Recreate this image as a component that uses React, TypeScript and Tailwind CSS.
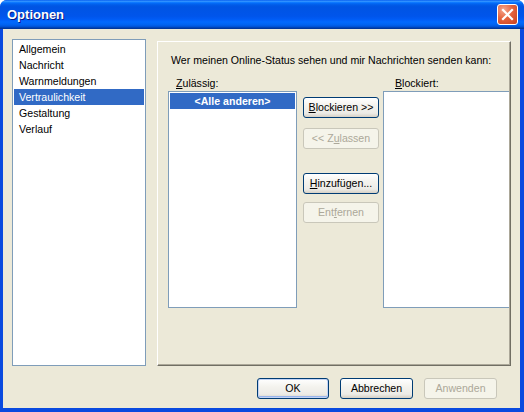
import type { ReactNode } from "react";

const FONT = "font-['Tahoma','Liberation_Sans',Arial,sans-serif]";

function XpButton({
  children,
  disabled,
  isDefault,
  w = "w-[76px]",
}: {
  children: ReactNode;
  disabled?: boolean;
  isDefault?: boolean;
  w?: string;
}) {
  if (disabled) {
    return (
      <div
        className={`${w} h-[21px] shrink-0 flex items-center justify-center rounded-[3px] border border-[#C9C7BA] bg-[#F5F4EA] text-[#ACA899]`}
      >
        {children}
      </div>
    );
  }
  return (
    <div
      className={`${w} h-[21px] shrink-0 flex items-center justify-center rounded-[3px] border border-[#003C74] bg-[linear-gradient(180deg,#FFFFFF_0%,#F4F3EE_40%,#ECEBE6_80%,#D6D0C5_100%)] text-black ${
        isDefault ? "shadow-[inset_0_0_0_1px_#C2D3F5,inset_0_-1px_0_1px_#98B4EC]" : ""
      }`}
    >
      {children}
    </div>
  );
}

const categories = [
  "Allgemein",
  "Nachricht",
  "Warnmeldungen",
  "Vertraulichkeit",
  "Gestaltung",
  "Verlauf",
];

export default function App() {
  return (
    <div
      className={`${FONT} text-[10.6px] leading-[13px] w-[524px] h-[412px] flex flex-col overflow-hidden rounded-t-[7px] bg-[#0A4ADF] select-none`}
    >
      {/* Title bar */}
      <div className="h-[29px] shrink-0 flex items-center justify-between pl-[7px] pr-[6px] bg-[linear-gradient(180deg,#0058EE_0%,#3593FF_4%,#288EFF_6%,#127DFF_8%,#036FFC_10%,#0262EE_14%,#0057E5_20%,#0054E3_24%,#0055EB_56%,#005BF5_66%,#026AFE_76%,#0062EF_86%,#0052D6_92%,#0040AB_96%,#003092_100%)]">
        <span className="font-['Trebuchet_MS','Liberation_Sans',Arial,sans-serif] font-bold text-[13px] text-white [text-shadow:1px_1px_0_#0A1883]">
          Optionen
        </span>
        <div className="w-[21px] h-[21px] rounded-[3px] border border-white flex items-center justify-center bg-[radial-gradient(circle_at_30%_25%,#F5A68E_0%,#E5643F_45%,#C7401E_100%)]">
          <svg width="13" height="13" viewBox="0 0 13 13">
            <path d="M2 2 L11 11 M11 2 L2 11" stroke="#fff" strokeWidth="2.2" strokeLinecap="square" />
          </svg>
        </div>
      </div>

      {/* Client area */}
      <div className="flex-1 ml-[3px] mr-[4px] mb-[4px] bg-[#ECE9D8] flex flex-col">
        <div className="flex pt-[10px] pl-[9px]">
          {/* Category list */}
          <div className="w-[134px] h-[327px] shrink-0 border border-[#7F9DB9] bg-white p-px">
            {categories.map((c) => (
              <div
                key={c}
                className={`h-[16px] flex items-center pl-[5px] ${
                  c === "Vertraulichkeit" ? "bg-[#316AC5] text-white" : "text-black"
                }`}
              >
                {c}
              </div>
            ))}
          </div>

          {/* Page panel */}
          <div className="ml-[11px] mt-[2px] w-[354px] h-[325px] shrink-0 border-l border-t border-white border-r border-b border-r-[#716F64] border-b-[#716F64]">
            <div className="w-full h-full border-r border-b border-[#ACA899] overflow-hidden pt-[12px] pl-[10px]">
              <div className="pl-[3px] text-black whitespace-nowrap">
                Wer meinen Online-Status sehen und mir Nachrichten senden kann:
              </div>
              <div className="flex mt-[10px]">
                <div className="w-[129px] shrink-0">
                  <div className="pl-[8px] h-[14px] text-black">
                    <span className="underline">Z</span>ulässig:
                  </div>
                  <div className="h-[217px] border border-[#7F9DB9] bg-white p-px">
                    <div className="h-[16px] flex items-center justify-center bg-[#316AC5] text-white font-bold">
                      &lt;Alle anderen&gt;
                    </div>
                  </div>
                </div>

                <div className="ml-[6px] w-[76px] shrink-0 flex flex-col pt-[20px]">
                  <XpButton>
                    <span>
                      <span className="underline">B</span>lockieren &gt;&gt;
                    </span>
                  </XpButton>
                  <div className="mt-[10px]">
                    <XpButton disabled>
                      <span>
                        &lt;&lt; Z<span className="underline">u</span>lassen
                      </span>
                    </XpButton>
                  </div>
                  <div className="mt-[24px]">
                    <XpButton>
                      <span>
                        <span className="underline">H</span>inzufügen...
                      </span>
                    </XpButton>
                  </div>
                  <div className="mt-[8px]">
                    <XpButton disabled>
                      <span>
                        Ent<span className="underline">f</span>ernen
                      </span>
                    </XpButton>
                  </div>
                </div>

                <div className="ml-[4px] w-[129px] shrink-0">
                  <div className="pl-[12px] h-[14px] text-black">
                    <span className="underline">B</span>lockiert:
                  </div>
                  <div className="h-[217px] border border-[#7F9DB9] bg-white" />
                </div>
              </div>
            </div>
          </div>
        </div>

        {/* Dialog buttons */}
        <div className="flex justify-end gap-[11px] pt-[12px] pr-[23px]">
          <XpButton isDefault w="w-[72px]">
            OK
          </XpButton>
          <XpButton w="w-[73px]">Abbrechen</XpButton>
          <XpButton disabled w="w-[73px]">
            Anwenden
          </XpButton>
        </div>
      </div>
    </div>
  );
}
